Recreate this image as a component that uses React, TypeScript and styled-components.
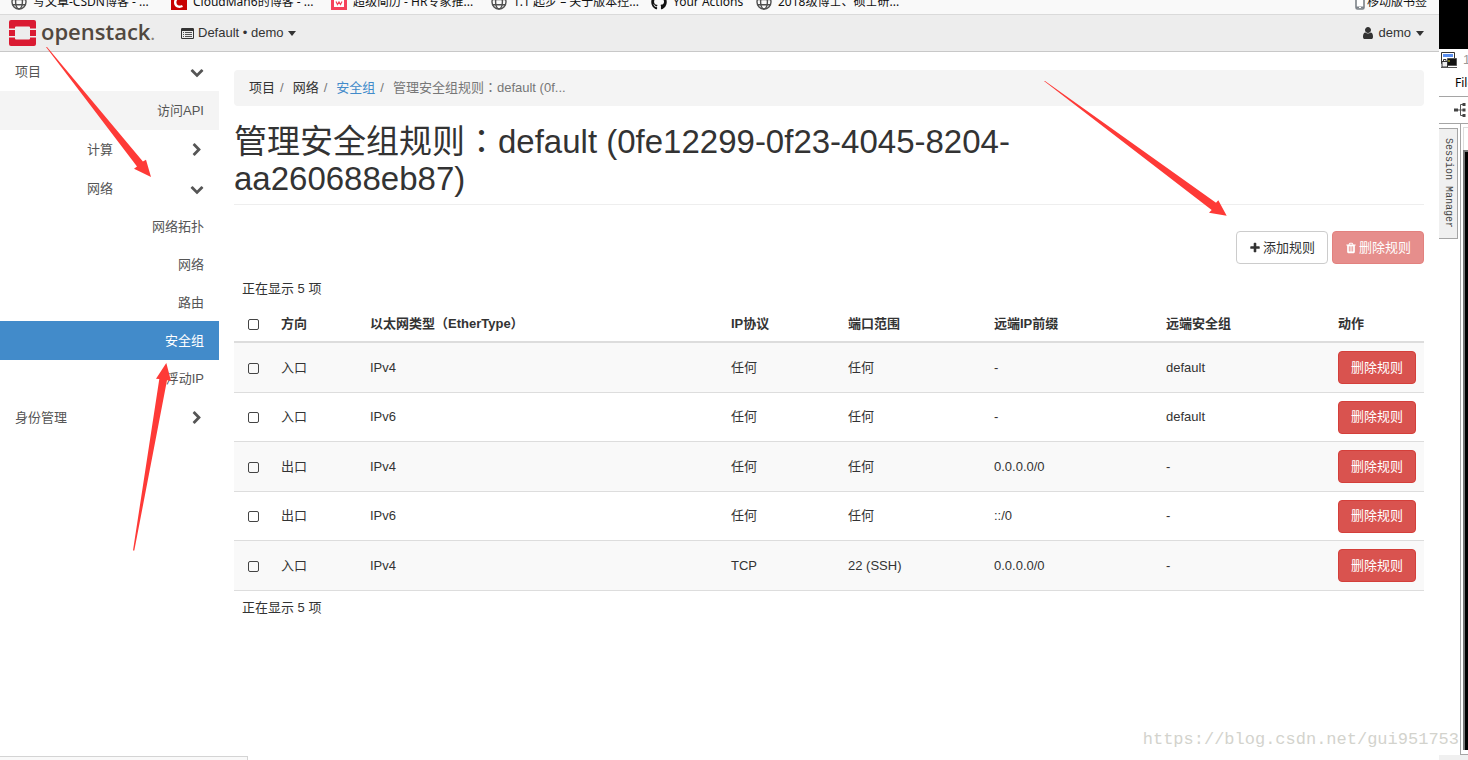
import React from 'react';
import styled, { createGlobalStyle, css } from 'styled-components';
import { FaGithub } from 'react-icons/fa';

const latin = `"Liberation Sans", "Noto Sans CJK SC", sans-serif`;

const GlobalStyle = createGlobalStyle`
  *, *::before, *::after { box-sizing: border-box; }
  body {
    margin: 0;
    background: #fff;
    color: #333;
    font: 13px/18px ${latin};
  }
  a { color: inherit; text-decoration: none; }
  button { font: inherit; cursor: pointer; }
  svg { flex: none; }
`;

const Desktop = styled.div`
  position: relative;
  display: flex;
  height: 100vh;
  overflow: hidden;
`;

const Browser = styled.div`
  flex: 1;
  min-width: 0;
  display: flex;
  flex-direction: column;
`;

/* Bookmarks bar */

const BookmarksBar = styled.nav`
  display: flex;
  align-items: flex-end;
  flex: none;
  height: 15px;
  padding: 0 12px 0 11px;
  overflow: hidden;
  background: #f9f9f9;
  border-bottom: 1px solid #dadada;
  color: #111;
  font: 12px/24px "Noto Sans", "Noto Sans CJK SC", sans-serif;
`;

const Bookmark = styled.a<{ $width?: number }>`
  display: flex;
  align-items: center;
  flex: none;
  gap: 6px;
  width: ${(p) => (p.$width ? `${p.$width}px` : 'auto')};
  height: 24px;
  white-space: nowrap;

  &:last-child { margin-left: auto; gap: 2px; }
`;

/* Dashboard header */

const TopBar = styled.header`
  display: flex;
  align-items: center;
  flex: none;
  height: 37px;
  padding: 0 15px 0 9px;
  background: #ededed;
  border-bottom: 1px solid #c8c8c8;
`;

const Brand = styled.a`
  display: flex;
  align-items: center;
  gap: 5px;
  width: 172px;
`;

const BrandName = styled.span`
  color: #51483f;
  font: 600 22px/30px "Open Sans", sans-serif;
  padding-bottom: 2px;

  small { font-size: 16px; color: #8a837c; }
`;

const MenuButton = styled.button`
  display: flex;
  align-items: center;
  gap: 4px;
  padding: 0;
  border: 0;
  background: none;
  color: #333;

  &:last-child { margin-left: auto; }
`;

const Caret = styled.span`
  margin-left: 1px;
  border: 4px solid transparent;
  border-top: 5px solid #333;
  border-bottom: 0;
`;

/* Side navigation */

const Page = styled.div`
  display: flex;
  flex: 1;
  min-height: 0;
`;

const SideNav = styled.nav`
  flex: none;
  width: 219px;
  color: #555;
`;

const NavItem = styled.a<{ $level: number; $leaf?: boolean; $tint?: boolean; $active?: boolean }>`
  display: flex;
  align-items: center;
  justify-content: ${(p) => (p.$leaf ? 'flex-end' : 'space-between')};
  height: ${(p) => (p.$leaf && !p.$tint ? 38 : 39)}px;
  padding: 0 15px 0 ${(p) => (p.$level === 1 ? 87 : 15)}px;
  background: ${(p) => (p.$tint ? '#f4f4f4' : 'transparent')};

  ${(p) =>
    p.$active &&
    css`
      height: 39px;
      margin-top: -1px;
      background: #428bca;
      color: #fff;
    `}
`;

/* Main column */

const Main = styled.main`
  flex: 1;
  min-width: 0;
  padding: 18px 15px 0;
`;

const Breadcrumb = styled.ol`
  display: flex;
  align-items: center;
  height: 36px;
  margin: 0;
  padding: 0 15px;
  list-style: none;
  background: #f4f4f4;
  border-radius: 4px;
  color: #777;
`;

const Crumb = styled.li<{ $tone: string }>`
  color: ${(p) => p.$tone};

  &:not(:first-child)::before {
    content: '/';
    padding: 0 9px 0 5px;
    color: #777;
  }
`;

const PageHeader = styled.header`
  margin-top: 17px;
  padding-bottom: 7px;
  border-bottom: 1px solid #eee;
`;

const Title = styled.h1`
  width: 75%;
  margin: 0;
  font-size: 33px;
  font-weight: 400;
  line-height: 37px;
`;

const Toolbar = styled.div`
  display: flex;
  justify-content: flex-end;
  gap: 4px;
  margin: 26px 0 8px;
`;

const Button = styled.button<{ $danger?: boolean }>`
  display: inline-flex;
  align-items: center;
  justify-content: center;
  gap: 2px;
  height: 33px;
  padding: 0 12px;
  border: 1px solid ${(p) => (p.$danger ? '#d43f3a' : '#ccc')};
  border-radius: 4px;
  background: ${(p) => (p.$danger ? '#d9534f' : '#fff')};
  color: ${(p) => (p.$danger ? '#fff' : '#333')};
  white-space: nowrap;
  vertical-align: middle;

  &:disabled { opacity: 0.65; cursor: default; }
`;

const Count = styled.p`
  margin: 0;
  padding: 8px;
`;

const RulesTable = styled.table`
  width: 100%;
  table-layout: fixed;
  border-collapse: separate;
  border-spacing: 0;
  text-align: left;

  th, td { padding: 0 8px; white-space: nowrap; }
  th { height: 37px; border-bottom: 2px solid #ddd; }
  td { height: 49px; border-bottom: 1px solid #ddd; }
  th:first-child, td:first-child { padding: 0; text-align: center; }
  tbody tr:nth-child(odd) td { height: 50px; background: #f9f9f9; }
`;

const Col = styled.col<{ $w?: number }>`
  width: ${(p) => (p.$w ? `${p.$w}px` : 'auto')};
`;

const Check = styled.input.attrs({ type: 'checkbox' })`
  appearance: none;
  display: inline-block;
  width: 11px;
  height: 11px;
  margin: 0;
  border: 1px solid #444;
  border-radius: 2px;
  vertical-align: middle;

  &:checked { background: #444; }
`;

/* Terminal window showing behind the browser */

const Terminal = styled.aside`
  display: flex;
  flex-direction: column;
  flex: none;
  width: 29px;
  overflow: hidden;
  white-space: nowrap;
`;

const TerminalBackdrop = styled.div`
  flex: none;
  height: 49px;
  background: #000;
`;

const TerminalTitle = styled.div`
  display: flex;
  align-items: center;
  gap: 6px;
  height: 22px;
  padding-left: 2px;
  color: #999;
`;

const TerminalMenu = styled.div`
  height: 26px;
  padding-left: 16px;
  border-bottom: 1px solid #a5a5a5;
  color: #000;
  font: 12px/24px "Noto Sans", sans-serif;
`;

const TerminalTools = styled.div`
  display: flex;
  align-items: center;
  height: 27px;
  padding-left: 15px;
  border-bottom: 1px solid #a5a5a5;
`;

const TerminalBody = styled.div`
  display: flex;
  flex: 1;
  gap: 2px;
  min-height: 0;
`;

const SessionTab = styled.button`
  flex: none;
  width: 19px;
  height: 111px;
  margin-top: 4px;
  padding: 0;
  border: 1px solid #a5a5a5;
  border-width: 1px 1px 1px 0;
  background: #f0f0f0;
  color: #444;
  writing-mode: vertical-rl;

  && { font: 10px/16px "Liberation Mono", monospace; }
`;

const ScreenFrame = styled.div`
  flex: 1;
  display: flex;
  flex-direction: column;
  padding: 3px 0 4px 2px;
  border-left: 1px solid #a5a5a5;
  border-bottom: 1px solid #a5a5a5;
`;

const ScreenTab = styled.div`
  height: 23px;
  padding: 8px 0 0 4px;
  border-left: 1px solid #ddd;
  border-top: 1px solid #ddd;

  &::before {
    content: '';
    display: block;
    width: 2px;
    height: 2px;
    background: #3c3;
  }
`;

const Screen = styled.div`
  flex: 1;
  border: 2px solid #777;
  border-width: 2px 0 0 2px;
  background: #000;
`;

const TerminalStatus = styled.div`
  height: 5px;
  background: #f0f0f0;
`;

/* Overlays */

const StatusBubble = styled.div`
  position: absolute;
  left: 0;
  bottom: 0;
  width: 248px;
  height: 4px;
  border: 1px solid #d4d4d4;
  border-width: 1px 1px 0 0;
  background: #f9f9f9;
`;

const Watermark = styled.span`
  position: absolute;
  right: 9px;
  bottom: 8px;
  color: #d3d3cd;
  font: 17px/24px "Liberation Mono", monospace;
`;

const Annotations = styled.svg`
  position: absolute;
  left: 0;
  top: 0;
  pointer-events: none;
`;

/* Icons */

const glyphs = {
  down: 'M1683 808l-742 741q-19 19-45 19t-45-19l-742-741q-19-19-19-45.5t19-45.5l166-165q19-19 45-19t45 19l531 531 531-531q19-19 45-19t45 19l166 165q19 19 19 45.5t-19 45.5z',
  right:
    'M1363 877l-742 742q-19 19-45 19t-45-19l-166-166q-19-19-19-45t19-45l531-531-531-531q-19-19-19-45t19-45l166-166q19-19 45-19t45 19l742 742q19 19 19 45t-19 45z',
  plus: 'M1600 736v192q0 40-28 68t-68 28h-416v416q0 40-28 68t-68 28h-192q-40 0-68-28t-28-68v-416h-416q-40 0-68-28t-28-68v-192q0-40 28-68t68-28h416v-416q0-40 28-68t68-28h192q40 0 68 28t28 68v416h416q40 0 68 28t28 68z',
  trash:
    'M704 1376v-704q0-14-9-23t-23-9h-64q-14 0-23 9t-9 23v704q0 14 9 23t23 9h64q14 0 23-9t9-23zm256 0v-704q0-14-9-23t-23-9h-64q-14 0-23 9t-9 23v704q0 14 9 23t23 9h64q14 0 23-9t9-23zm256 0v-704q0-14-9-23t-23-9h-64q-14 0-23 9t-9 23v704q0 14 9 23t23 9h64q14 0 23-9t9-23zm-544-992h448l-48-117q-7-9-17-11h-317q-10 2-17 11zm928 32v64q0 14-9 23t-23 9h-96v948q0 83-47 143.5t-113 60.5h-832q-66 0-113-58.5t-47-141.5v-952h-96q-14 0-23-9t-9-23v-64q0-14 9-23t23-9h309l70-167q15-37 54-63t79-26h320q40 0 79 26t54 63l70 167h309q14 0 23 9t9 23z',
  user: 'M1536 1399q0 109-62.5 187t-150.5 78h-854q-88 0-150.5-78t-62.5-187q0-85 8.5-160.5t31.5-152 58.5-131 94-89 134.5-34.5q131 128 313 128t313-128q76 0 134.5 34.5t94 89 58.5 131 31.5 152 8.5 160.5zm-256-887q0 159-112.5 271.5t-271.5 112.5-271.5-112.5-112.5-271.5 112.5-271.5 271.5-112.5 271.5 112.5 112.5 271.5z',
};

const Glyph = ({ name, size = 12, box = '0 0 1792 1792' }: { name: keyof typeof glyphs; size?: number; box?: string }) => (
  <svg width={size} height={size} viewBox={box} fill="currentColor" aria-hidden="true">
    <path d={glyphs[name]} />
  </svg>
);

const GlobeIcon = () => (
  <svg width="16" height="16" viewBox="0 0 16 16" fill="none" stroke="#505050" strokeWidth="1.4" aria-hidden="true">
    <circle cx="8" cy="8" r="7" />
    <ellipse cx="8" cy="8" rx="3.4" ry="7" />
    <path d="M1.5 5.5h13M1.5 10.7h13" />
  </svg>
);

const CsdnIcon = () => (
  <svg width="16" height="16" viewBox="0 0 16 16" aria-hidden="true">
    <path d="M0 0h16v16H0z" fill="#c80000" />
    <path d="M12 4.5C8 2 4.2 4.5 4.2 8.500c0 4 4 5 7.300 3.500" fill="none" stroke="#fff" strokeWidth="2.4" />
  </svg>
);

const ResumeIcon = () => (
  <svg width="16" height="16" viewBox="0 0 16 16" aria-hidden="true">
    <path d="M0 0h16v16H0z" fill="#f5415a" />
    <path d="M3 2h10v11H3z" fill="#fff" />
    <path d="M5 7.500l1.500 3L8 8l1.500 2.500 1.500-3" fill="none" stroke="#f5415a" strokeWidth="1.2" />
  </svg>
);

const PhoneIcon = () => (
  <svg width="10" height="16" viewBox="0 0 10 16" aria-hidden="true">
    <rect x="1" y="1" width="8" height="14" rx="1.5" fill="#fff" stroke="#7c8288" strokeWidth="1.6" />
    <path d="M1 12.500h8v2H1z" fill="#7c8288" />
    <path d="M4 13.500h2" stroke="#fff" />
  </svg>
);

const OpenStackMark = () => (
  <svg width="27" height="26" viewBox="0 0 27 26" aria-hidden="true">
    <path
      fill="#da1a32"
      d="M2 0h23a2 2 0 0 1 2 2v6.500h-6V7.500a1 1 0 0 0-1-1H7a1 1 0 0 0-1 1v1H0V2a2 2 0 0 1 2-2zM0 10h6v6H0zM21 10h6v6h-6zM0 17.500h6v1a1 1 0 0 0 1 1h13a1 1 0 0 0 1-1v-1h6V24a2 2 0 0 1-2 2H2a2 2 0 0 1-2-2z"
    />
  </svg>
);

const ListIcon = () => (
  <svg width="13" height="11" viewBox="0 0 13 11" aria-hidden="true">
    <path fillRule="evenodd" fill="#333" d="M1.200 0h10.600A1.200 1.200 0 0 1 13 1.200v8.600a1.200 1.200 0 0 1-1.200 1.200H1.200A1.200 1.200 0 0 1 0 9.800V1.200A1.200 1.200 0 0 1 1.200 0zM1 3v6.700c0 .2.1.3.3.3h10.400c.2 0 .3-.1.3-.3V3z" />
    <path d="M2 4.500h1M4 4.500h7M2 6.500h1M4 6.500h7M2 8.500h1M4 8.500h7" stroke="#555" strokeWidth="1" />
  </svg>
);

const PuttyIcon = () => (
  <svg width="16" height="16" viewBox="0 0 16 16" aria-hidden="true">
    <path d="M.5.5h13v11H.5z" fill="#fff" stroke="#333" />
    <path d="M2 2h10v3H2z" fill="#5a8ff0" />
    <path d="M6.500 6.500h9v7h-9z" fill="#111" stroke="#555" />
    <path d="M1 9.500h5.500V15H1z" fill="#eee" stroke="#333" />
    <path d="M2.500 9V7.500h2.500V9" fill="none" stroke="#333" />
    <path d="M7 9h2" stroke="#dd3" />
    <path d="M0 15.500h16" stroke="#555" />
  </svg>
);

const TreeIcon = () => (
  <svg width="13" height="14" viewBox="0 0 13 14" aria-hidden="true">
    <path d="M3 7h7M11 1.500H6.500v11H11" fill="none" stroke="#555" />
    <path d="M0 5.500h4v3H0zM8.500 0h3v3h-3zM8.500 5.500h3v3h-3zM8.500 11h3v3h-3z" fill="#444" />
  </svg>
);

/* Data */

const columns = ['方向', '以太网类型（EtherType）', 'IP协议', '端口范围', '远端IP前缀', '远端安全组', '动作'];

const rules = [
  ['入口', 'IPv4', '任何', '任何', '-', 'default'],
  ['入口', 'IPv6', '任何', '任何', '-', 'default'],
  ['出口', 'IPv4', '任何', '任何', '0.0.0.0/0', '-'],
  ['出口', 'IPv6', '任何', '任何', '::/0', '-'],
  ['入口', 'IPv4', 'TCP', '22 (SSH)', '0.0.0.0/0', '-'],
];

export default function App() {
  return (
    <>
      <GlobalStyle />
      <Desktop>
        <Browser>
          <BookmarksBar>
            <Bookmark href="#" $width={160}><GlobeIcon />写文章-CSDN博客 - ...</Bookmark>
            <Bookmark href="#" $width={160}><CsdnIcon />CloudMan6的博客 - ...</Bookmark>
            <Bookmark href="#" $width={160}><ResumeIcon />超级简历 - HR专家推...</Bookmark>
            <Bookmark href="#" $width={160}><GlobeIcon />1.1 起步 – 关于版本控...</Bookmark>
            <Bookmark href="#" $width={105}><FaGithub size={16} />Your Actions</Bookmark>
            <Bookmark href="#"><GlobeIcon />2018级博士、硕士研...</Bookmark>
            <Bookmark href="#"><PhoneIcon />移动版书签</Bookmark>
          </BookmarksBar>

          <TopBar>
            <Brand href="#">
              <OpenStackMark />
              <BrandName>openstack<small>.</small></BrandName>
            </Brand>
            <MenuButton><ListIcon />Default • demo<Caret /></MenuButton>
            <MenuButton><Glyph name="user" size={12} box="128 128 1536 1536" />demo<Caret /></MenuButton>
          </TopBar>

          <Page>
            <SideNav>
              <NavItem href="#" $level={0}>项目<Glyph name="down" size={14} /></NavItem>
              <NavItem href="#" $level={1} $leaf $tint>访问API</NavItem>
              <NavItem href="#" $level={1}>计算<Glyph name="right" size={14} /></NavItem>
              <NavItem href="#" $level={1}>网络<Glyph name="down" size={14} /></NavItem>
              <NavItem href="#" $level={2} $leaf>网络拓扑</NavItem>
              <NavItem href="#" $level={2} $leaf>网络</NavItem>
              <NavItem href="#" $level={2} $leaf>路由</NavItem>
              <NavItem href="#" $level={2} $leaf $active>安全组</NavItem>
              <NavItem href="#" $level={2} $leaf>浮动IP</NavItem>
              <NavItem href="#" $level={0}>身份管理<Glyph name="right" size={14} /></NavItem>
            </SideNav>

            <Main>
              <Breadcrumb>
                <Crumb $tone="#333">项目</Crumb>
                <Crumb $tone="#333">网络</Crumb>
                <Crumb $tone="#428bca"><a href="#">安全组</a></Crumb>
                <Crumb $tone="#777">管理安全组规则<span lang="ja">：</span>default (0f...</Crumb>
              </Breadcrumb>

              <PageHeader>
                <Title>管理安全组规则<span lang="ja">：</span>default (0fe12299-0f23-4045-8204-aa260688eb87)</Title>
              </PageHeader>

              <Toolbar>
                <Button><Glyph name="plus" />添加规则</Button>
                <Button $danger disabled><Glyph name="trash" />删除规则</Button>
              </Toolbar>

              <Count>正在显示 5 项</Count>
              <RulesTable>
                <colgroup>
                  <Col $w={39} /><Col $w={89} /><Col /><Col $w={117} />
                  <Col $w={146} /><Col $w={172} /><Col $w={172} /><Col $w={94} />
                </colgroup>
                <thead>
                  <tr>
                    <th><Check aria-label="全选" /></th>
                    {columns.map((name) => <th key={name}>{name}</th>)}
                  </tr>
                </thead>
                <tbody>
                  {rules.map((rule, i) => (
                    <tr key={i}>
                      <td><Check aria-label={`选择规则 ${i + 1}`} /></td>
                      {rule.map((value, j) => <td key={j}>{value}</td>)}
                      <td><Button $danger>删除规则</Button></td>
                    </tr>
                  ))}
                </tbody>
              </RulesTable>
              <Count>正在显示 5 项</Count>
            </Main>
          </Page>
        </Browser>

        <Terminal>
          <TerminalBackdrop />
          <TerminalTitle><PuttyIcon />1</TerminalTitle>
          <TerminalMenu>File</TerminalMenu>
          <TerminalTools><TreeIcon /></TerminalTools>
          <TerminalBody>
            <SessionTab>Session Manager</SessionTab>
            <ScreenFrame>
              <ScreenTab />
              <Screen />
            </ScreenFrame>
          </TerminalBody>
          <TerminalStatus />
        </Terminal>

        <StatusBubble />
        <Watermark>https://blog.csdn.net/gui951753</Watermark>
        <Annotations width="1240" height="560" viewBox="0 0 1240 560" fill="#fe3a37" aria-hidden="true">
          <path d="M46 47L137 166.500L134 168.700L151 177L146 159.700L142.900 161.500L47 47Z" />
          <path d="M1044 81L1211.700 210L1209 212.700L1226.700 215.700L1218.300 200.300L1216 202.700L1045 81Z" />
          <path d="M133 550.500L159.300 379L156 378.700L166.300 363L171 381L167 380.300L134.300 550.500Z" />
        </Annotations>
      </Desktop>
    </>
  );
}
